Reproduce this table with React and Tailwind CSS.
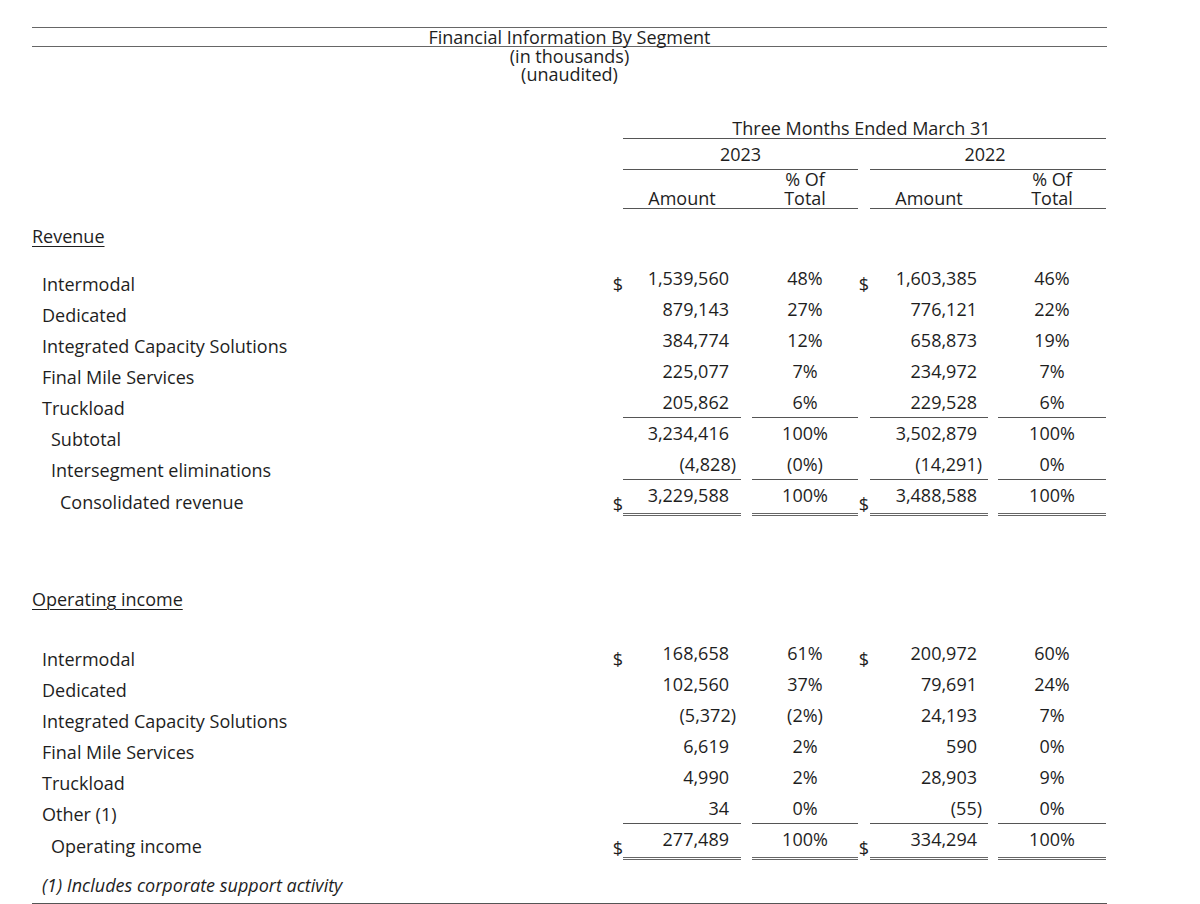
const COLS =
  "grid grid-cols-[568px_23px_118px_11px_106px_12px_118px_10px_108px]";

const revenue = [
  { label: "Intermodal", indent: 0, dollar: true, a1: "1,539,560", p1: "48%", a2: "1,603,385", p2: "46%" },
  { label: "Dedicated", indent: 0, a1: "879,143", p1: "27%", a2: "776,121", p2: "22%" },
  { label: "Integrated Capacity Solutions", indent: 0, a1: "384,774", p1: "12%", a2: "658,873", p2: "19%" },
  { label: "Final Mile Services", indent: 0, a1: "225,077", p1: "7%", a2: "234,972", p2: "7%" },
  { label: "Truckload", indent: 0, a1: "205,862", p1: "6%", a2: "229,528", p2: "6%", line: "single" },
  { label: "Subtotal", indent: 1, a1: "3,234,416", p1: "100%", a2: "3,502,879", p2: "100%" },
  { label: "Intersegment eliminations", indent: 1, a1: "(4,828)", p1: "(0%)", a2: "(14,291)", p2: "0%", line: "single" },
  { label: "Consolidated revenue", indent: 2, total: true, a1: "3,229,588", p1: "100%", a2: "3,488,588", p2: "100%", line: "double" },
];

const operating = [
  { label: "Intermodal", indent: 0, dollar: true, a1: "168,658", p1: "61%", a2: "200,972", p2: "60%" },
  { label: "Dedicated", indent: 0, a1: "102,560", p1: "37%", a2: "79,691", p2: "24%" },
  { label: "Integrated Capacity Solutions", indent: 0, a1: "(5,372)", p1: "(2%)", a2: "24,193", p2: "7%" },
  { label: "Final Mile Services", indent: 0, a1: "6,619", p1: "2%", a2: "590", p2: "0%" },
  { label: "Truckload", indent: 0, a1: "4,990", p1: "2%", a2: "28,903", p2: "9%" },
  { label: "Other (1)", indent: 0, a1: "34", p1: "0%", a2: "(55)", p2: "0%", line: "single" },
  { label: "Operating income", indent: 1, total: true, a1: "277,489", p1: "100%", a2: "334,294", p2: "100%", line: "double" },
];

const indents = ["pl-[10px]", "pl-[19px]", "pl-[28px]"];

const DataRow = ({ row }) => {
  const isNeg1 = row.a1.startsWith("(");
  const isNeg2 = row.a2.startsWith("(");
  const lineCls =
    row.line === "double"
      ? "border-b-[3px] border-double border-[#666]"
      : row.line === "single"
      ? "border-b border-[#555]"
      : "";
  const showDollar = row.dollar || row.total;
  const dollarPad = row.total ? "pt-[14px]" : "pt-[11px]";
  return (
    <div className={`${COLS} ${row.total ? "h-[36px]" : "h-[31px]"} leading-[20px]`}>
      <div className={`${row.total ? "pt-[12px]" : "pt-[11px]"} ${indents[row.indent]}`}>
        {row.label}
      </div>
      <div className={`text-right ${dollarPad}`}>{showDollar ? "$" : ""}</div>
      <div className={`text-right pt-[5px] ${isNeg1 ? "pr-[5px]" : "pr-[12px]"} ${lineCls}`}>
        {row.a1}
      </div>
      <div />
      <div className={`text-center pt-[5px] ${lineCls}`}>{row.p1}</div>
      <div className={`text-right pr-[1px] ${dollarPad}`}>{showDollar ? "$" : ""}</div>
      <div className={`text-right pt-[5px] ${isNeg2 ? "pr-[6px]" : "pr-[11px]"} ${lineCls}`}>
        {row.a2}
      </div>
      <div />
      <div className={`text-center pt-[5px] ${lineCls}`}>{row.p2}</div>
    </div>
  );
};

const App = () => {
  return (
    <div className="w-[1200px] h-[904px] bg-white text-[#1e1e1e] text-[18px] font-['Open_Sans',sans-serif] overflow-hidden">
      <div className="ml-[32px] w-[1075px] pt-[27px]">
        {/* title block */}
        <div className="border-t border-b border-[#666] text-center leading-[18px]">
          Financial Information By Segment
        </div>
        <div className="text-center leading-[18px]">(in thousands)</div>
        <div className="text-center leading-[18px]">(unaudited)</div>

        {/* column headings */}
        <div className={`${COLS} mt-[36px] leading-[18px]`}>
          <div className="col-start-3 col-span-7 text-center border-b border-[#555] pb-[1px] pr-[6px]">
            Three Months Ended March 31
          </div>
        </div>
        <div className={`${COLS} leading-[18px]`}>
          <div className="col-start-3 col-span-3 text-center border-b border-[#555] py-[6px]">
            2023
          </div>
          <div className="col-start-7 col-span-3 text-center border-b border-[#555] py-[6px] pr-[6px]">
            2022
          </div>
        </div>
        <div className={`${COLS} leading-[19px]`}>
          <div className="col-start-3 col-span-3 grid grid-cols-[118px_11px_106px] border-b border-[#555]">
            <div className="self-end text-center">Amount</div>
            <div />
            <div className="text-center">
              % Of
              <br />
              Total
            </div>
          </div>
          <div className="col-start-7 col-span-3 grid grid-cols-[118px_10px_108px] border-b border-[#555]">
            <div className="self-end text-center">Amount</div>
            <div />
            <div className="text-center">
              % Of
              <br />
              Total
            </div>
          </div>
        </div>

        {/* revenue */}
        <div className="mt-[18px] leading-[18px]">
          <span className="underline underline-offset-[3px] decoration-1">Revenue</span>
        </div>
        <div className="mt-[18px]">
          {revenue.map((r) => (
            <DataRow key={r.label} row={r} />
          ))}
        </div>

        {/* operating income */}
        <div className="mt-[74px] leading-[18px]">
          <span className="underline underline-offset-[3px] decoration-1">Operating income</span>
        </div>
        <div className="mt-[30px]">
          {operating.map((r) => (
            <DataRow key={r.label} row={r} />
          ))}
        </div>

        {/* footnote */}
        <div className="mt-[16px] pl-[10px] pb-[9px] leading-[18px] italic border-b border-[#555]">
          (1) Includes corporate support activity
        </div>
      </div>
    </div>
  );
};

export default App;
